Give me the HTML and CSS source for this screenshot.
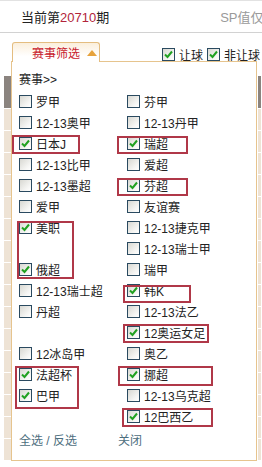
FILE: index.html
```html
<!DOCTYPE html>
<html lang="zh-CN">
<head>
  <meta charset="UTF-8" />
  <meta name="viewport" content="width=device-width, initial-scale=1.0" />
  <title>赛事筛选</title>
  <link rel="stylesheet" href="styles.css">
</head>
<body>
  <div class="topbar">
    <span class="issue">当前第<em>20710</em>期</span>
    <span class="note">SP值仅供</span>
  </div>

  <div class="toolbar">
    <div class="tab">赛事筛选<i class="arrow"></i></div>
    <div class="types">
      <label class="opt"><span class="cb on"><svg viewBox="0 0 11 11"><path d="M2 5.5 L4.5 8 L9 2.5"/></svg></span>让球</label>
      <label class="opt"><span class="cb on"><svg viewBox="0 0 11 11"><path d="M2 5.5 L4.5 8 L9 2.5"/></svg></span>非让球</label>
    </div>
  </div>

  <div class="table">
    <div class="row head"><span></span><span></span><span></span><span></span><span></span><span></span><span></span></div>
    <div class="row"><span></span><span></span><span></span><span></span><span></span><span></span><span></span></div>
    <div class="row"><span></span><span></span><span></span><span></span><span></span><span></span><span></span></div>
    <div class="row"><span></span><span></span><span></span><span></span><span></span><span></span><span></span></div>
    <div class="row"><span></span><span></span><span></span><span></span><span></span><span></span><span></span></div>
    <div class="row"><span></span><span></span><span></span><span></span><span></span><span></span><span></span></div>
    <div class="row"><span></span><span></span><span></span><span></span><span></span><span></span><span></span></div>
    <div class="row"><span></span><span></span><span></span><span></span><span></span><span></span><span></span></div>
    <div class="row"><span></span><span></span><span></span><span></span><span></span><span></span><span></span></div>
    <div class="row"><span></span><span></span><span></span><span></span><span></span><span></span><span></span></div>
    <div class="row"><span></span><span></span><span></span><span></span><span></span><span></span><span></span></div>
    <div class="row"><span></span><span></span><span></span><span></span><span></span><span></span><span></span></div>
    <div class="row"><span></span><span></span><span></span><span></span><span></span><span></span><span></span></div>
    <div class="row"><span></span><span></span><span></span><span></span><span></span><span></span><span></span></div>
    <div class="row"><span></span><span></span><span></span><span></span><span></span><span></span><span></span></div>
    <div class="row"><span></span><span></span><span></span><span></span><span></span><span></span><span></span></div>
    <div class="row foot"><span></span><span class="teal"></span><span></span><span></span><span></span><span></span><span></span></div>
  </div>

  <div class="panel">
    <div class="panel-title">赛事&gt;&gt;</div>
    <div class="leagues">
      <label class="item"><span class="cb"></span>罗甲</label>
      <label class="item"><span class="cb"></span>芬甲</label>
      <label class="item"><span class="cb"></span>12-13奥甲</label>
      <label class="item"><span class="cb"></span>12-13丹甲</label>
      <label class="item"><span class="cb on"><svg viewBox="0 0 11 11"><path d="M2 5.5 L4.5 8 L9 2.5"/></svg></span>日本J</label>
      <label class="item"><span class="cb on"><svg viewBox="0 0 11 11"><path d="M2 5.5 L4.5 8 L9 2.5"/></svg></span>瑞超</label>
      <label class="item"><span class="cb"></span>12-13比甲</label>
      <label class="item"><span class="cb"></span>爱超</label>
      <label class="item"><span class="cb"></span>12-13墨超</label>
      <label class="item"><span class="cb on"><svg viewBox="0 0 11 11"><path d="M2 5.5 L4.5 8 L9 2.5"/></svg></span>芬超</label>
      <label class="item"><span class="cb"></span>爱甲</label>
      <label class="item"><span class="cb"></span>友谊赛</label>
      <label class="item"><span class="cb on"><svg viewBox="0 0 11 11"><path d="M2 5.5 L4.5 8 L9 2.5"/></svg></span>美职</label>
      <label class="item"><span class="cb"></span>12-13捷克甲</label>
      <div class="item"></div>
      <label class="item"><span class="cb"></span>12-13瑞士甲</label>
      <label class="item"><span class="cb on"><svg viewBox="0 0 11 11"><path d="M2 5.5 L4.5 8 L9 2.5"/></svg></span>俄超</label>
      <label class="item"><span class="cb"></span>瑞甲</label>
      <label class="item"><span class="cb"></span>12-13瑞士超</label>
      <label class="item"><span class="cb on"><svg viewBox="0 0 11 11"><path d="M2 5.5 L4.5 8 L9 2.5"/></svg></span>韩K</label>
      <label class="item"><span class="cb"></span>丹超</label>
      <label class="item"><span class="cb"></span>12-13法乙</label>
      <div class="item"></div>
      <label class="item"><span class="cb on"><svg viewBox="0 0 11 11"><path d="M2 5.5 L4.5 8 L9 2.5"/></svg></span>12奥运女足</label>
      <label class="item"><span class="cb"></span>12冰岛甲</label>
      <label class="item"><span class="cb"></span>奥乙</label>
      <label class="item"><span class="cb on"><svg viewBox="0 0 11 11"><path d="M2 5.5 L4.5 8 L9 2.5"/></svg></span>法超杯</label>
      <label class="item"><span class="cb on"><svg viewBox="0 0 11 11"><path d="M2 5.5 L4.5 8 L9 2.5"/></svg></span>挪超</label>
      <label class="item"><span class="cb on"><svg viewBox="0 0 11 11"><path d="M2 5.5 L4.5 8 L9 2.5"/></svg></span>巴甲</label>
      <label class="item"><span class="cb"></span>12-13乌克超</label>
      <div class="item"></div>
      <label class="item"><span class="cb on"><svg viewBox="0 0 11 11"><path d="M2 5.5 L4.5 8 L9 2.5"/></svg></span>12巴西乙</label>
    </div>
    <div class="panel-foot">
      <a href="#">全选 / 反选</a>
      <a href="#">关闭</a>
    </div>

    <!-- red annotation boxes -->
    <div class="mark m1"></div>
    <div class="mark m2"></div>
    <div class="mark m3"></div>
    <div class="mark m4"></div>
    <div class="mark m5"></div>
    <div class="mark m6"></div>
    <div class="mark m7"></div>
    <div class="mark m8"></div>
    <div class="mark m9"></div>
  </div>
</body>
</html>
```

FILE: styles.css
```css
body {
  margin: 0;
  width: 262px;
  height: 467px;
  overflow: hidden;
  position: relative;
  background: #fff;
  font-family: "Liberation Sans", "Noto Sans CJK SC", sans-serif;
  font-size: 12px;
  color: #222;
}

.topbar {
  box-sizing: border-box;
  height: 33px;
  border-top: 1px solid #e2e2e2;
  border-bottom: 1px solid #d2d2d2;
  display: flex;
  align-items: center;
  padding-left: 21px;
  font-size: 13px;
  white-space: nowrap;
  overflow: hidden;
}
.issue em { font-style: normal; color: #b2243a; }
.note { margin-left: 111px; color: #9a9a9a; }

.toolbar {
  height: 43px;
  display: flex;
  align-items: flex-start;
  overflow: hidden;
}
.tab {
  position: relative;
  z-index: 2;
  box-sizing: border-box;
  flex: none;
  margin: 9px 0 0 12px;
  width: 88px;
  height: 20px;
  padding-left: 19px;
  border: 1px solid #e4bd80;
  border-bottom: none;
  border-radius: 3px 3px 0 0;
  background: linear-gradient(#fbefdc, #fff 70%);
  color: #c8202c;
  display: flex;
  align-items: center;
  white-space: nowrap;
}
.arrow {
  width: 0;
  height: 0;
  margin-left: 7px;
  border-left: 5px solid transparent;
  border-right: 5px solid transparent;
  border-bottom: 6px solid #e6a23c;
}
.types {
  margin: 13px 0 0 62px;
  display: flex;
  gap: 4px;
  white-space: nowrap;
}
.opt { display: flex; align-items: center; gap: 4px; }

.cb {
  box-sizing: border-box;
  flex: none;
  width: 13px;
  height: 13px;
  border: 1px solid #2a4a60;
  background: linear-gradient(135deg, #d8d8d2, #f6f6f4 70%, #fff);
  display: flex;
  align-items: center;
  justify-content: center;
}
.cb svg { width: 11px; height: 11px; }
.cb path { fill: none; stroke: #21a121; stroke-width: 2; }

/* table behind the dropdown */
.table { margin-left: 4px; }
.row {
  display: grid;
  grid-template-columns: 39px 58px 41px 38px 40px 38px 1fr;
  height: 22px;
}
.row span {
  border-right: 1px solid #fff;
  border-bottom: 1px solid #fff;
  background: #eee3d5;
}
.row.head { height: 33px; }
.row.head span { background: #8b847f; }
.row .teal { background: #2f5d58; }

/* dropdown */
.panel {
  position: absolute;
  left: 11px;
  top: 61px;
  z-index: 1;
  box-sizing: border-box;
  width: 246px;
  height: 400px;
  padding: 8px 0 0 7px;
  border: 1px solid #e6c48e;
  background: #fff;
}
.panel-title { height: 21px; line-height: 21px; }
.leagues {
  display: grid;
  grid-template-columns: 108px 1fr;
  grid-auto-rows: 21px;
}
.item {
  display: flex;
  align-items: center;
  gap: 4px;
  white-space: nowrap;
}
.panel-foot {
  margin-top: 4px;
  display: grid;
  grid-template-columns: 99px auto;
  line-height: 21px;
}
.panel-foot a { color: #4d6e7e; text-decoration: none; }

.mark {
  position: absolute;
  box-sizing: border-box;
  border: 2px solid #b03848;
}
.m1 { left: 0; top: 73px; width: 68px; height: 19px; }
.m2 { left: 105px; top: 74px; width: 71px; height: 18px; }
.m3 { left: 105px; top: 116px; width: 71px; height: 18px; }
.m4 { left: 5px; top: 159px; width: 57px; height: 58px; }
.m5 { left: 111px; top: 223px; width: 68px; height: 18px; }
.m6 { left: 111px; top: 262px; width: 86px; height: 19px; }
.m7 { left: 3px; top: 304px; width: 64px; height: 43px; }
.m8 { left: 106px; top: 304px; width: 95px; height: 20px; }
.m9 { left: 110px; top: 346px; width: 91px; height: 19px; }
```
